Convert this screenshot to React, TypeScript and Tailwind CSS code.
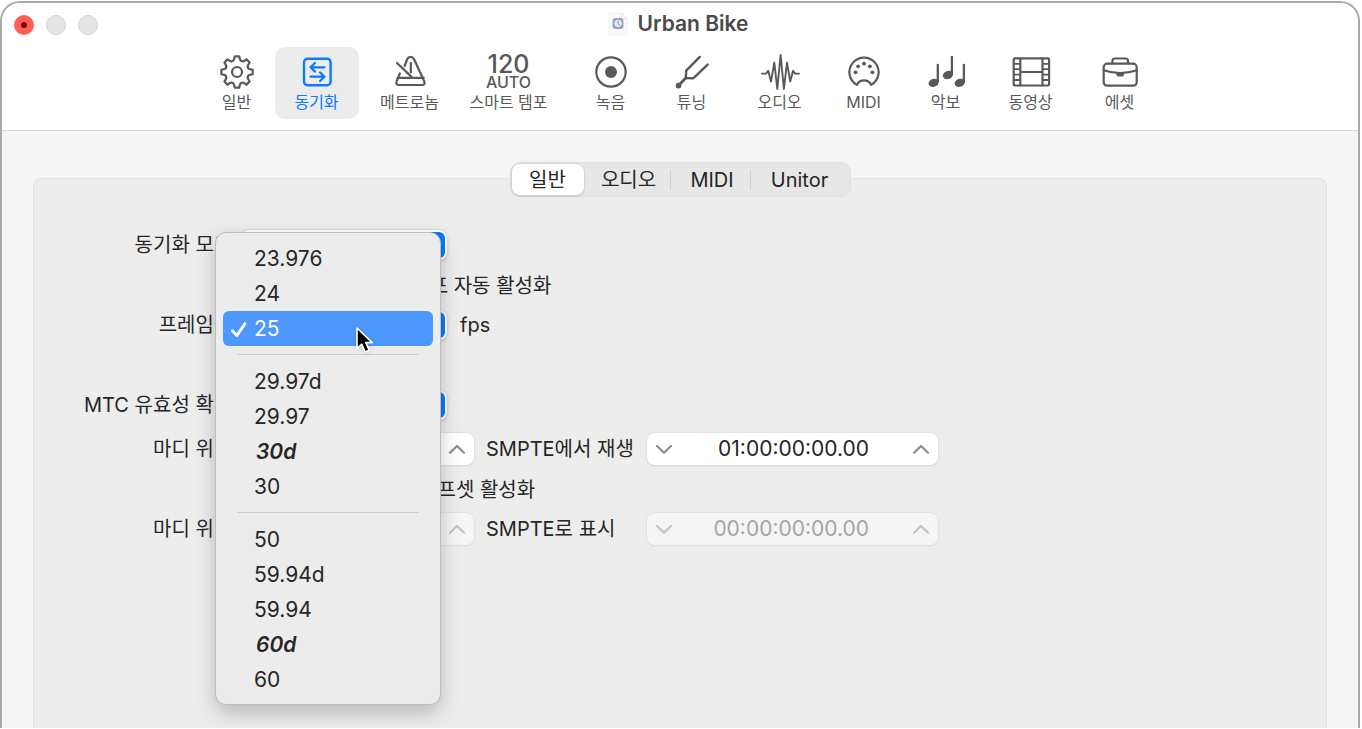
import { useState } from 'react';
import type { ReactNode } from 'react';
import clsx from 'clsx';
import { ChevronDown, ChevronUp } from 'lucide-react';

// eight rounded teeth around the centre of a 40x36 box
function gearPath() {
  const point = (radius: number, deg: number) => {
    const a = (deg * Math.PI) / 180;
    return `${(20 + radius * Math.sin(a)).toFixed(2)} ${(18 - radius * Math.cos(a)).toFixed(2)}`;
  };
  let d = `M${point(15.8, -8)}`;
  for (let k = 0; k < 8; k++) {
    const t = k * 45;
    d += `L${point(15.8, t + 8)}L${point(12.6, t + 14)}Q${point(11, t + 22.5)} ${point(12.6, t + 31)}L${point(15.8, t + 37)}`;
  }
  return d + 'Z';
}

function Icon({ children }: { children: ReactNode }) {
  return (
    <svg
      width="40"
      height="36"
      viewBox="0 0 40 36"
      fill="none"
      stroke="currentColor"
      strokeWidth="2.2"
      strokeLinecap="round"
      strokeLinejoin="round"
      aria-hidden="true"
    >
      {children}
    </svg>
  );
}

const toolbar = [
  {
    label: '일반',
    size: 'w-[76px]',
    icon: (
      <Icon>
        <path d={gearPath()} />
        <circle cx="20" cy="18" r="5" />
      </Icon>
    ),
  },
  {
    label: '동기화',
    size: 'w-21',
    icon: (
      <Icon>
        <rect x="7" y="4.7" width="26.6" height="26.6" rx="3.5" strokeWidth="2.4" />
        <path d="M27.5 13.3H13.7M18 9L13.5 13.3L18 17.6M13.5 22.7H27.3M23 18.4L27.5 22.7L23 27" />
      </Icon>
    ),
  },
  {
    label: '메트로놈',
    size: 'ml-[13px] w-[76px]',
    icon: (
      <Icon>
        <path d="M14.6 12L17.3 5Q18.3 2.8 20.6 2.8T24 5L34.3 27.5Q35.6 31 32 31H9Q5.4 31 6.6 27.5L9.8 19.5M7.5 23.8H33.8" />
        <path d="M7 9L21.3 22.6M20.8 8.8V18.5" />
      </Icon>
    ),
  },
  {
    label: '스마트 템포',
    size: 'ml-[19px] w-21',
    icon: (
      <span className="flex h-9 flex-col items-center">
        <span className="text-[25px] leading-5 font-medium">120</span>
        <span className="text-base leading-4 font-medium">AUTO</span>
      </span>
    ),
  },
  {
    label: '녹음',
    size: 'ml-[22px] w-[76px]',
    icon: (
      <Icon>
        <circle cx="20" cy="18" r="14.7" />
        <circle cx="20" cy="18" r="6" fill="currentColor" stroke="none" />
      </Icon>
    ),
  },
  {
    label: '튜닝',
    size: 'ml-[5px] w-[76px]',
    icon: (
      <Icon>
        <path d="M27.8 2.9L14.2 16.6L13.8 24L21.5 24.2L35.6 10.6" strokeWidth="2.4" />
        <path d="M6.5 31.5L13.8 24" strokeWidth="2.8" />
        <circle cx="6.5" cy="31.6" r="2.9" fill="currentColor" stroke="none" />
      </Icon>
    ),
  },
  {
    label: '오디오',
    size: 'ml-[12px] w-[76px]',
    icon: (
      <Icon>
        <path
          d="M2 19.6H6L8.2 16.7L11 27.6L14.3 8.6L17.3 35L20.6 1L23.9 35L27 8.6L30.2 27.6L33 16.7L35 19.6H39"
          strokeWidth="1.9"
        />
      </Icon>
    ),
  },
  {
    label: 'MIDI',
    size: 'ml-[8px] w-[76px]',
    icon: (
      <Icon>
        <path d="M12.8 30.9A14.6 14.6 0 1 1 27.2 30.9A8 8 0 0 0 12.8 30.9Z" />
        <g fill="currentColor" stroke="none">
          <circle cx="11.6" cy="18.3" r="1.9" />
          <circle cx="14.1" cy="12.3" r="1.9" />
          <circle cx="20" cy="9.7" r="1.9" />
          <circle cx="25.9" cy="12.3" r="1.9" />
          <circle cx="28.4" cy="18.3" r="1.9" />
        </g>
      </Icon>
    ),
  },
  {
    label: '악보',
    size: 'ml-[6px] w-[76px]',
    icon: (
      <Icon>
        <path d="M11.8 10.8V28M25.9 3V20M37.9 10.8V28" strokeWidth="2.3" />
        <g fill="currentColor" stroke="none">
          <ellipse cx="7.6" cy="28.8" rx="5.2" ry="4" transform="rotate(-20 7.6 28.8)" />
          <ellipse cx="21.9" cy="21" rx="5.2" ry="4" transform="rotate(-20 21.9 21)" />
          <ellipse cx="33.7" cy="28.8" rx="5.2" ry="4" transform="rotate(-20 33.7 28.8)" />
        </g>
      </Icon>
    ),
  },
  {
    label: '동영상',
    size: 'ml-[9px] w-[76px]',
    icon: (
      <Icon>
        <rect x="2.7" y="4.3" width="35.4" height="27.2" rx="1.2" />
        <path d="M9.3 4.5V31.3M31.5 4.5V31.3M9.3 18H31.5" />
        <path
          d="M3 9.8H9M3 15.2H9M3 20.6H9M3 26H9M32 9.8H38M32 15.2H38M32 20.6H38M32 26H38"
          strokeWidth="1.8"
        />
      </Icon>
    ),
  },
  {
    label: '에셋',
    size: 'ml-[13px] w-[76px]',
    icon: (
      <Icon>
        <rect x="3.7" y="9.7" width="33" height="22" rx="3.5" />
        <path d="M12.4 9.5V7Q12.4 4.5 14.9 4.5H25.5Q28 4.5 28 7V9.5M3.8 16.2Q20.2 22 36.6 16.2" />
        <path d="M16.4 18.5H24V20.5Q24 22.6 22 22.6H18.4Q16.4 22.6 16.4 20.5Z" fill="currentColor" stroke="none" />
      </Icon>
    ),
  },
];

const tabs = [
  { label: '일반', size: 'w-[72px]' },
  { label: '오디오', size: 'w-[87px] pl-1' },
  { label: 'MIDI', size: 'w-[80px] pl-1' },
  { label: 'Unitor', size: 'w-[98px]' },
];

const frameRates = [
  ['23.976', '24', '25'],
  ['29.97d', '29.97', '30d', '30'],
  ['50', '59.94d', '59.94', '60d', '60'],
];

function Popup({ id, options }: { id: string; options: string[] }) {
  return (
    <div className="relative w-[208px]">
      <select
        id={id}
        className="h-8 w-full appearance-none rounded-[9px] border border-[#dcdcdc] bg-white pr-8 pl-3 shadow-sm outline-none"
      >
        {options.map((option) => (
          <option key={option}>{option}</option>
        ))}
      </select>
      <span className="pointer-events-none absolute inset-y-[3px] right-[3px] flex w-6 flex-col items-center justify-center rounded-md bg-[#0a7aff] text-white">
        <ChevronUp size={12} strokeWidth={3} />
        <ChevronDown size={12} strokeWidth={3} />
      </span>
    </div>
  );
}

type StepperProps = {
  id: string;
  label: string;
  value: string;
  size: string;
  disabled?: boolean;
};

function Stepper({ id, label, value, size, disabled = false }: StepperProps) {
  return (
    <div
      className={clsx(
        'flex h-8 items-center justify-between rounded-lg px-2',
        size,
        disabled
          ? 'bg-[#f5f5f5] text-[#a6a6a6] shadow-[0_0_1px_1px_#e2e2e2,0_1px_1px_#d0d0d0]'
          : 'bg-white shadow-[0_0_1px_1px_#e0e0e0,0_1px_1px_#b4b4b4]',
      )}
    >
      <button
        type="button"
        disabled={disabled}
        aria-label={`${label} 감소`}
        className={disabled ? 'text-[#c4c4c4]' : 'text-[#8e8e8e]'}
      >
        <svg width="18" height="12" viewBox="0 0 18 12" fill="none" stroke="currentColor" strokeWidth="2.3" strokeLinecap="round" strokeLinejoin="round">
          <path d="M2 3L9 9.8L16 3" />
        </svg>
      </button>
      <input
        id={id}
        aria-label={label}
        defaultValue={value}
        disabled={disabled}
        className="w-full min-w-0 bg-transparent pr-[43px] text-right text-[21px] outline-none"
      />
      <button
        type="button"
        disabled={disabled}
        aria-label={`${label} 증가`}
        className={disabled ? 'text-[#c4c4c4]' : 'text-[#8e8e8e]'}
      >
        <svg width="18" height="12" viewBox="0 0 18 12" fill="none" stroke="currentColor" strokeWidth="2.3" strokeLinecap="round" strokeLinejoin="round">
          <path d="M2 9.8L9 3L16 9.8" />
        </svg>
      </button>
    </div>
  );
}

function Row({ label, htmlFor, gap, children }: { label?: string; htmlFor?: string; gap?: string; children: ReactNode }) {
  return (
    <div className={clsx('flex h-8 items-center', gap)}>
      <div className="mr-[2px] w-[204px] shrink-0 text-right whitespace-nowrap">
        {label && <label htmlFor={htmlFor}>{label}</label>}
      </div>
      {children}
    </div>
  );
}

function FrameRateMenu({ value, onChange }: { value: string; onChange: (rate: string) => void }) {
  return (
    <div
      role="menu"
      className="absolute -top-[77px] -left-[25px] z-10 w-[226px] rounded-[11px] border border-[#bdbdbd] bg-[#ececec] px-[7px] pt-2 pb-[7px] text-[21px] shadow-[0_8px_20px_rgba(0,0,0,0.22)]"
    >
      {frameRates.map((group, i) => (
        <div key={i}>
          {i > 0 && <div className="mx-[14px] mt-2 mb-[9px] h-px bg-[#cdcdcd]" />}
          {group.map((rate) => (
            <button
              key={rate}
              type="button"
              role="menuitemradio"
              aria-checked={rate === value}
              onClick={() => onChange(rate)}
              className={clsx(
                'flex h-[35px] w-full items-center rounded-md pl-[7px]',
                rate === value && 'bg-[#4c98ff] text-white',
              )}
            >
              <span className="w-6">
                {rate === value && (
                  <svg width="18" height="18" viewBox="0 0 18 18" fill="none" stroke="currentColor" strokeWidth="2.8" strokeLinecap="round" strokeLinejoin="round">
                    <path d="M2.4 10.8L6.8 15.6L15 3.6" />
                  </svg>
                )}
              </span>
              <span className={clsx((rate === '30d' || rate === '60d') && 'pl-0.5 font-semibold italic')}>{rate}</span>
            </button>
          ))}
        </div>
      ))}
      <svg className="pointer-events-none absolute top-[92px] left-[138px] drop-shadow-sm" width="22" height="32" viewBox="0 0 22 32">
        <path
          d="M3 3V23.5L7.8 19.2L11.2 27L15.2 25.2L11.8 17.6H18.2Z"
          fill="#000"
          stroke="#fff"
          strokeWidth="1.6"
          strokeLinejoin="round"
        />
      </svg>
    </div>
  );
}

export default function App() {
  const [section, setSection] = useState('동기화');
  const [tab, setTab] = useState('일반');
  const [frameRate, setFrameRate] = useState('25');

  return (
    <div className="flex min-h-screen bg-white pt-px pr-[2px] pb-px font-['Inter','Noto_Sans_CJK_KR',sans-serif] text-[#262626]">
      <div className="flex w-full flex-col overflow-hidden rounded-t-[20px] border-2 border-b-0 border-[#a9a9a9] bg-[#f5f5f5]">
        <header className="border-b border-[#d6d6d6] bg-white pb-[11px] text-[#595959]">
          <div className="grid h-11 grid-cols-3 items-center">
            <div className="flex gap-3 pl-3">
              <button type="button" aria-label="닫기" className="flex size-5 items-center justify-center rounded-full bg-[#ff5f57]">
                <span className="size-1.5 rounded-full bg-[#7a0000]" />
              </button>
              <button type="button" aria-label="최소화" className="size-5 rounded-full border border-[#d0d0d0] bg-[#e4e4e4]" />
              <button type="button" aria-label="확대/축소" className="size-5 rounded-full border border-[#d0d0d0] bg-[#e4e4e4]" />
            </div>
            <div className="flex items-center justify-center gap-2.5 pr-1 pb-0.5">
              <svg width="20" height="24" viewBox="0 0 20 24" aria-hidden="true">
                <path d="M1 1H14L19 6.5V23H1Z" fill="#f8f8f8" stroke="#ececec" strokeWidth="0.8" />
                <path d="M14 1V6.5H19Z" fill="#fff" stroke="#dedede" strokeWidth="0.8" />
                <rect x="4.5" y="6" width="11" height="11" rx="3" fill="#a4a9b1" />
                <circle cx="10" cy="11.5" r="4.4" fill="#dfe8f5" stroke="#7d8592" strokeWidth="0.8" />
                <path d="M10 8.5V11.5L12 13" fill="none" stroke="#7b8aa3" strokeWidth="0.9" />
              </svg>
              <h1 className="text-[21px] leading-6 font-semibold text-[#4a4a4a]">Urban Bike</h1>
            </div>
          </div>
          <nav className="flex justify-center pr-1">
            {toolbar.map((item) => (
              <button
                key={item.label}
                type="button"
                onClick={() => setSection(item.label)}
                className={clsx(
                  'flex shrink-0 flex-col items-center rounded-[10px] pt-[7px] pb-[5px]',
                  item.size,
                  section === item.label && 'bg-[#ececec] text-[#0a7aff]',
                )}
              >
                {item.icon}
                <span className="text-base whitespace-nowrap">{item.label}</span>
              </button>
            ))}
          </nav>
        </header>

        <main className="flex grow flex-col px-[31px] pt-[31px] text-xl">
          <div role="tablist" className="z-10 flex self-center rounded-[10px] border border-[#dfdfdf] bg-[#e7e7e7] p-px">
            {tabs.map((item, i) => (
              <button
                key={item.label}
                type="button"
                role="tab"
                aria-selected={tab === item.label}
                onClick={() => setTab(item.label)}
                className={clsx(
                  'flex h-[31px] items-center justify-center',
                  item.size,
                  tab === item.label && 'rounded-lg bg-white shadow-[0_0_1px_1px_#d4d4d4,0_1px_2px_#aaaaaa]',
                )}
              >
                <span className="grow">{item.label}</span>
                {i > 0 && i < 3 && <span className="h-5 w-px bg-[#cfcfcf]" />}
              </button>
            ))}
          </div>

          <section className="-mt-[19px] grow rounded-t-lg border border-b-0 border-[#e3e3e3] bg-[#ededed] pt-[50px]">
            <Row label="동기화 모드:" htmlFor="sync-mode">
              <Popup id="sync-mode" options={['내부', 'MTC', '수동']} />
            </Row>
            <Row gap="mt-[9px]">
              <label className="flex items-center gap-1 whitespace-nowrap">
                <input type="checkbox" className="size-4" />
                외부 동기화 및 탭 템포 자동 활성화
              </label>
            </Row>
            <Row label="프레임률:" htmlFor="frame-rate" gap="mt-[7px]">
              <div className="relative">
                <Popup id="frame-rate" options={[frameRate]} />
                <FrameRateMenu value={frameRate} onChange={setFrameRate} />
              </div>
              <span className="ml-3">fps</span>
            </Row>
            <Row label="MTC 유효성 확인:" htmlFor="mtc-check" gap="mt-12">
              <Popup id="mtc-check" options={['4프레임', '8프레임']} />
            </Row>
            <Row label="마디 위치:" htmlFor="bar-play" gap="mt-3">
              <Stepper id="bar-play" label="마디 위치" value="1 1 1 1" size="w-[234px]" />
              <label htmlFor="smpte-play" className="ml-3 w-[161px] whitespace-nowrap">
                SMPTE에서 재생
              </label>
              <Stepper id="smpte-play" label="SMPTE에서 재생" value="01:00:00:00.00" size="w-[291px]" />
            </Row>
            <Row gap="mt-[9px]">
              <label className="flex items-center gap-1 whitespace-nowrap">
                <input type="checkbox" className="size-4" />
                별도 SMPTE 보기 오프셋 활성화
              </label>
            </Row>
            <Row label="마디 위치:" htmlFor="bar-view" gap="mt-[7px]">
              <Stepper id="bar-view" label="마디 위치" value="1 1 1 1" size="w-[234px]" disabled />
              <label htmlFor="smpte-view" className="ml-3 w-[161px] whitespace-nowrap">
                SMPTE로 표시
              </label>
              <Stepper id="smpte-view" label="SMPTE로 표시" value="00:00:00:00.00" size="w-[291px]" disabled />
            </Row>
          </section>
        </main>
      </div>
    </div>
  );
}
